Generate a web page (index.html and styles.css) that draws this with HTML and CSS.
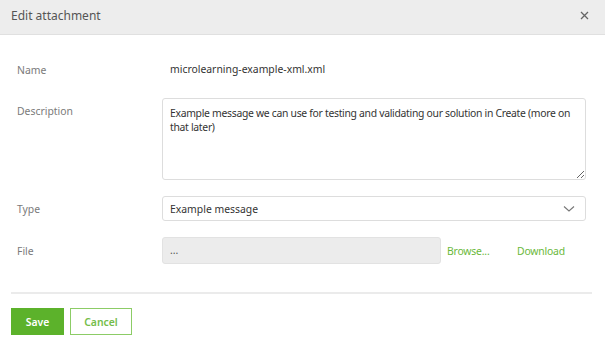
FILE: index.html
```html
<!DOCTYPE html>
<html lang="en">
<head>
  <meta charset="UTF-8" />
  <title>Edit attachment</title>
  <link rel="stylesheet" href="styles.css">
</head>
<body>
  <div class="modal">
    <div class="modal-header">
      <h2>Edit attachment</h2>
      <svg class="close" width="9" height="9" viewBox="0 0 9 9"><path d="M1 1 L8 8 M8 1 L1 8" stroke="#666" stroke-width="1.3"/></svg>
    </div>
    <div class="modal-body">
      <div class="row">
        <label>Name</label>
        <div class="value">microlearning-example-xml.xml</div>
      </div>
      <div class="row">
        <label>Description</label>
        <textarea>Example message we can use for testing and validating our solution in Create (more on that later)</textarea>
      </div>
      <div class="row">
        <label>Type</label>
        <div class="select">
          <span>Example message</span>
          <svg width="12" height="8" viewBox="0 0 12 8"><path d="M1 1.5 L6 6 L11 1.5" fill="none" stroke="#777" stroke-width="1.1"/></svg>
        </div>
      </div>
      <div class="row">
        <label>File</label>
        <div class="file-input">...</div>
        <a class="link browse">Browse...</a>
        <a class="link">Download</a>
      </div>
    </div>
    <div class="modal-footer">
      <button class="save">Save</button>
      <button class="cancel">Cancel</button>
    </div>
  </div>
</body>
</html>
```

FILE: styles.css
```css
body {
  margin: 0;
  font-family: 'Noto Sans', sans-serif;
  font-size: 10.4px;
  color: #444;
  background: white;
}
.modal {
  width: 605px;
  height: 346px;
}
.modal-header {
  height: 35px;
  background: #ededed;
  border-bottom: 1px solid #e0e0e0;
  display: flex;
  align-items: center;
  justify-content: space-between;
  padding: 0 16px 3px 11px;
  box-sizing: border-box;
}
.modal-header h2 {
  margin: 0;
  font-size: 12px;
  font-weight: normal;
  color: #555;
}
.modal-body {
  padding: 22px 19px 0 17px;
}
.row {
  display: flex;
  align-items: center;
  margin-bottom: 16px;
}
.row label {
  width: 145px;
  flex: none;
  color: #7a7a7a;
}
.row:nth-child(2) {
  align-items: flex-start;
}
.row:nth-child(2) label {
  padding-top: 6px;
}
.value {
  padding-left: 8px;
  color: #333;
  height: 25px;
  line-height: 25px;
}
textarea {
  width: 424px;
  height: 82px;
  box-sizing: border-box;
  border: 1px solid #ddd;
  border-radius: 3px;
  padding: 7px 6px 7px 7px;
  font-family: inherit;
  font-size: 10.4px;
  letter-spacing: -0.3px;
  line-height: 14px;
  color: #333;
  resize: vertical;
}
.select {
  width: 424px;
  height: 25px;
  box-sizing: border-box;
  border: 1px solid #ddd;
  border-radius: 3px;
  display: flex;
  align-items: center;
  justify-content: space-between;
  padding: 0 10px 0 7px;
  color: #333;
}
.file-input {
  width: 279px;
  height: 27px;
  box-sizing: border-box;
  background: #ececec;
  border: 1px solid #e2e2e2;
  border-radius: 3px;
  padding: 0 7px;
  line-height: 25px;
  color: #555;
}
.link {
  color: #6ab83a;
  margin-left: 6px;
  letter-spacing: -0.2px;
}
.link.browse {
  width: 64px;
}
.modal-footer {
  margin: 28px 13px 0 11px;
  border-top: 2px solid #ebebeb;
  padding-top: 14px;
  display: flex;
  gap: 6px;
}
button {
  height: 27px;
  font-family: inherit;
  font-size: 10.4px;
  font-weight: 600;
  border-radius: 0;
  cursor: pointer;
}
.save {
  width: 53px;
  background: #5cb22b;
  border: 1px solid #5cb22b;
  color: white;
}
.cancel {
  width: 62px;
  background: white;
  border: 1px solid #8ccc66;
  color: #74bd4a;
}
```
